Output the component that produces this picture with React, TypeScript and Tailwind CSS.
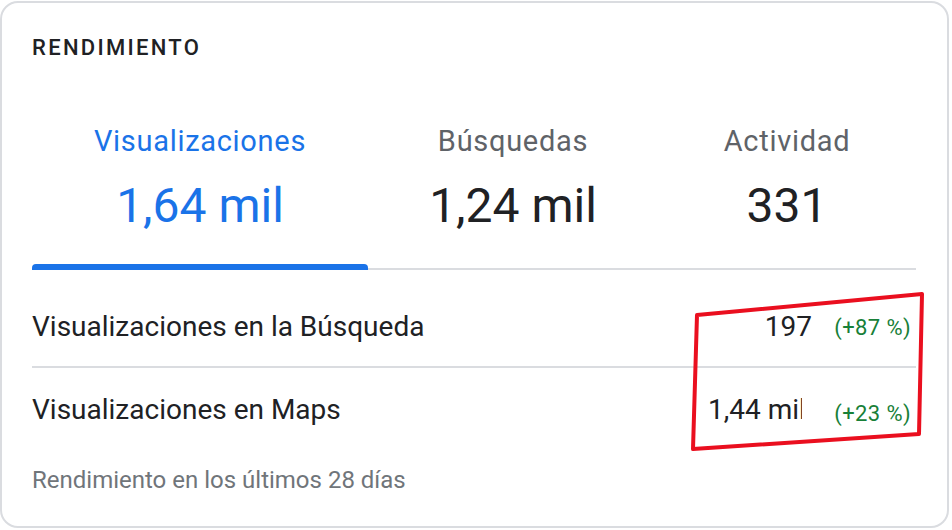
import React from 'react';

const tabs = [
  { label: 'Visualizaciones', value: '1,64 mil', active: true, width: 'w-[336px]' },
  { label: 'Búsquedas', value: '1,24 mil', active: false, width: 'w-[290px]' },
  { label: 'Actividad', value: '331', active: false, width: 'flex-1' },
];

export default function App() {
  return (
    <div className="w-[952px] h-[530px] bg-white font-['Roboto',sans-serif] relative">
      <div className="w-[949px] h-[527px] border-2 border-[#dadce0] rounded-[18px] mt-px bg-white px-[30px]">
        <h2 className="mt-[31px] text-[22px] leading-[28px] font-medium tracking-[2.3px] text-[#202124]">
          RENDIMIENTO
        </h2>

        {/* tabs */}
        <div className="mt-[61px] flex w-[884px] border-b-2 border-[#dadce0]">
          {tabs.map((t) => (
            <div key={t.label} className={`${t.width} relative flex flex-col items-center`}>
              <div className={`text-[29px] leading-[36px] tracking-[0.7px] ${t.active ? 'text-[#1a73e8]' : 'text-[#5f6368]'}`}>
                {t.label}
              </div>
              <div className={`mt-[19px] text-[48px] leading-[56px] ${t.active ? 'text-[#1a73e8]' : 'text-[#202124]'}`}>
                {t.value}
              </div>
              <div className="h-[34px]" />
              {t.active && (
                <div className="absolute left-0 right-0 bottom-[-2px] h-[6px] rounded-t-[4px] bg-[#1a73e8]" />
              )}
            </div>
          ))}
        </div>

        {/* rows */}
        <div className="w-[884px]">
          <div className="flex items-center h-[98px] pt-[18px] border-b-2 border-[#dadce0]">
            <span className="flex-1 text-[28px] leading-[36px] text-[#202124]">Visualizaciones en la Búsqueda</span>
            <span className="w-[104px] text-right text-[28px] leading-[36px] text-[#202124] whitespace-nowrap">197</span>
            <span className="w-[104px] text-right text-[22px] leading-[28px] text-[#188038] tracking-[0.4px] pr-[5px] pt-[1px]">(+87 %)</span>
          </div>
          <div className="flex items-center h-[84px]">
            <span className="flex-1 text-[28px] leading-[36px] text-[#202124]">Visualizaciones en Maps</span>
            <span className="w-[104px] text-[28px] leading-[36px] text-[#202124] whitespace-nowrap">
              {/* the reference shows this value cut off at its right edge */}
              <span className="block w-[94px] overflow-hidden">1,44 mil</span>
            </span>
            <span className="w-[104px] text-right text-[22px] leading-[28px] text-[#188038] tracking-[0.4px] pr-[5px] pt-[8px]">(+23 %)</span>
          </div>
          <div className="mt-[14px] text-[24px] leading-[28px] text-[#70757a]">Rendimiento en los últimos 28 días</div>
        </div>
      </div>

      {/* red annotation */}
      <svg className="absolute left-0 top-0 pointer-events-none" width="952" height="530">
        <polygon
          points="697,314 922,293 919,433 693,448"
          fill="none"
          stroke="#ea0f1f"
          strokeWidth="4"
          strokeLinejoin="round"
        />
      </svg>
    </div>
  );
}
